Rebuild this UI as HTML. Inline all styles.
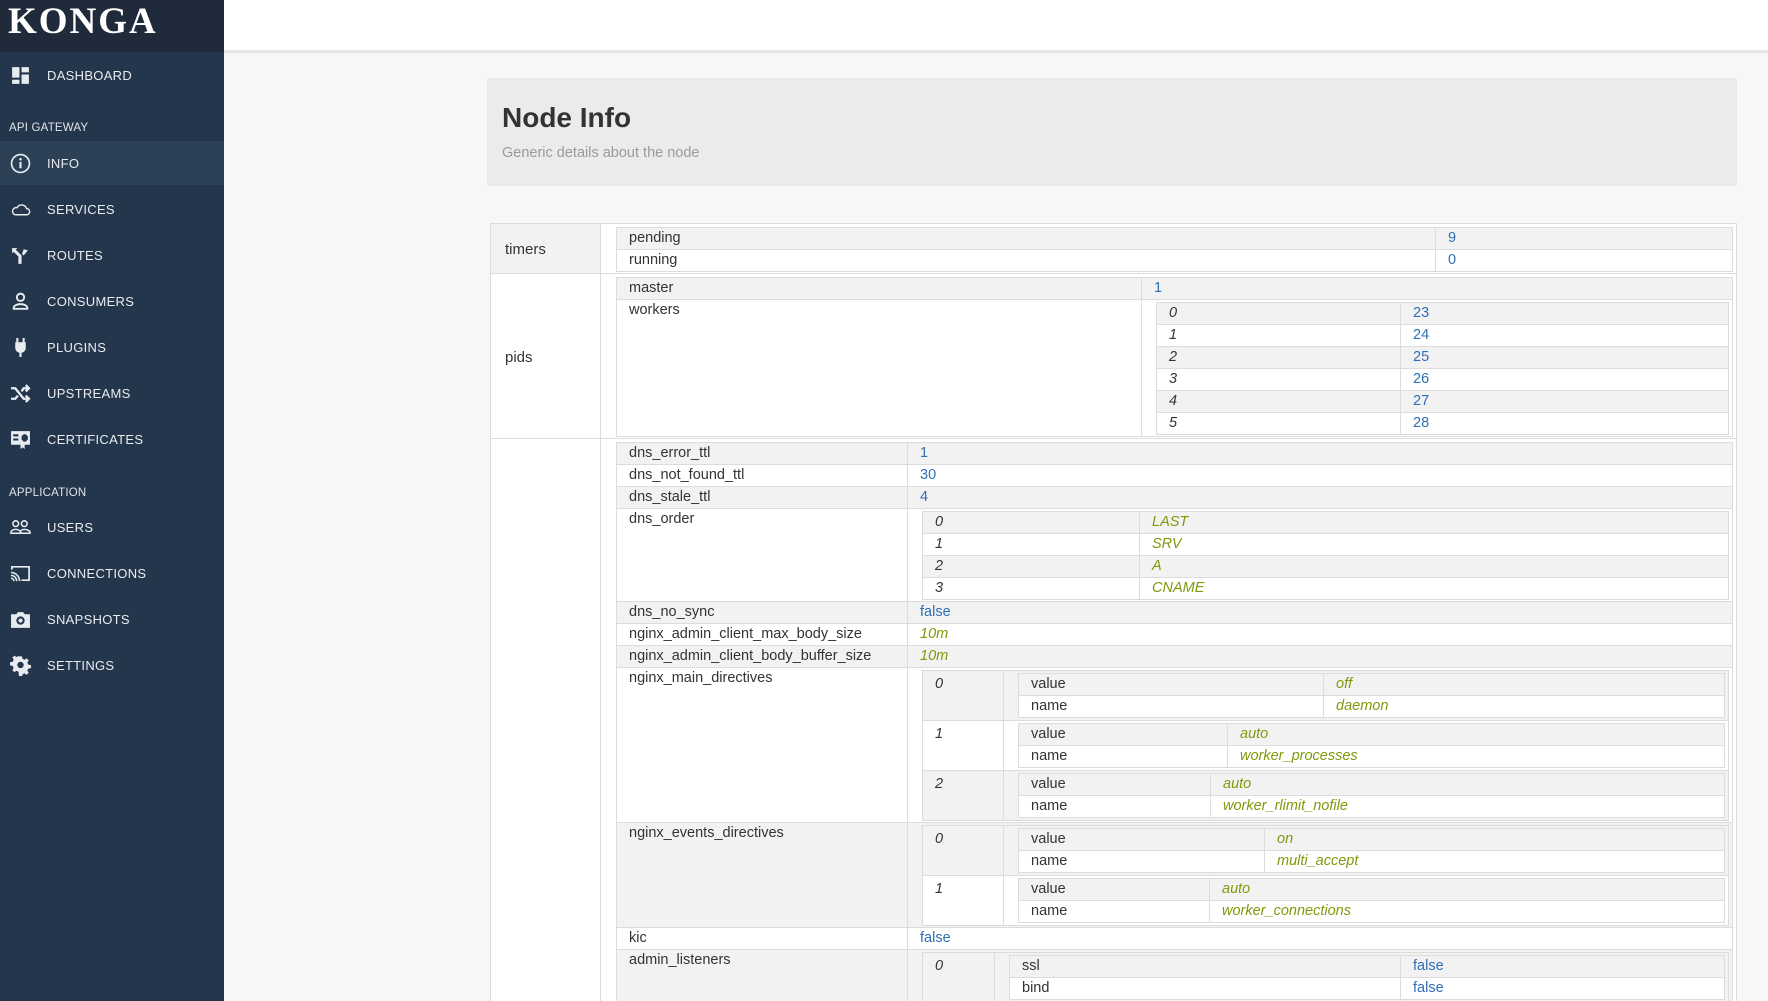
<!DOCTYPE html>
<html><head><meta charset="utf-8"><style>
*{box-sizing:border-box;margin:0;padding:0}
html{width:1768px;height:1001px;overflow:hidden}
body{width:1768px;height:1001px;overflow:hidden;background:#f7f7f7;font-family:"Liberation Sans",sans-serif;color:#333;position:relative}
#sb{position:absolute;left:0;top:0;width:224px;height:1001px;background:#24364b}
#logo{height:52px;background:#1f2b3a;color:#fff;font-family:"Liberation Serif",serif;font-weight:bold;font-size:37px;letter-spacing:2px;padding:0 0 0 8px;line-height:44px}
.it{position:absolute;left:0;width:224px;height:44px;color:#e8ecf0;font-size:13px;letter-spacing:.3px;line-height:46px;padding-left:47px}
.it svg{position:absolute;left:10px;top:12px;width:21px;height:21px}
.it.act{background:#2c4156}
.sec{position:absolute;left:9px;font-size:11.5px;color:#dfe4ea;letter-spacing:.2px}
#hd{position:absolute;left:224px;top:0;right:0;height:53px;background:#fff;border-bottom:3px solid #e6e6e6}
#panel{position:absolute;left:487px;top:78px;width:1250px;height:108px;background:#ebebeb}
#panel h1{position:absolute;left:15px;top:24px;font-size:28px;font-weight:bold;color:#333}
#panel p{position:absolute;left:15px;top:67px;font-size:14.5px;color:#9a9a9a}
.o{position:absolute;left:490px;top:223px;width:1247px;border-collapse:collapse;background:#fff}
.o>tbody>tr>td{border:1px solid #dcdcdc;padding:3px 3px 1px 15px;vertical-align:top}
.o>tbody>tr>td.lb{width:110px;padding-left:14px;vertical-align:middle;font-size:15px;background:#fff}
.o>tbody>tr:first-child>td.lb{background:#f2f2f2}
table.i{width:100%;border-collapse:collapse}
table.i>tbody>tr>td{border:1px solid #dcdcdc;height:21px;line-height:21px;padding:0 12px;font-size:14.5px;vertical-align:top}
table.i>tbody>tr:nth-child(odd)>td{background:#f2f2f2}
table.i>tbody>tr:nth-child(even)>td{background:#fff}
table.i>tbody>tr>td.n{padding:2px 3px 1px 14px}
table.i>tbody>tr>td.nx{padding:2px 3px 2px 14px}
.b{color:#2f6fb5}
.s{color:#7d9a0a;font-style:italic}
.x{font-style:italic}
</style></head><body>
<div id="sb">
<div id="logo">KONGA</div>
<div class="it" style="top:53px"><svg viewBox="0 0 20 20"><path fill="#e8ecf0" d="M2 2h7v10H2zM11 2h7v5h-7zM11 9h7v9h-7zM2 14h7v4H2z"/></svg>DASHBOARD</div>
<div class="sec" style="top:122px">API GATEWAY</div>
<div class="it act" style="top:141px"><svg viewBox="0 0 20 20"><circle cx="10" cy="10" r="8.5" fill="none" stroke="#e8ecf0" stroke-width="1.6"/><rect x="9" y="8.5" width="2" height="6" fill="#e8ecf0"/><circle cx="10" cy="6" r="1.2" fill="#e8ecf0"/></svg>INFO</div>
<div class="it" style="top:187px"><svg viewBox="0 0 24 20"><path fill="none" stroke="#e8ecf0" stroke-width="1.6" d="M6 16h13a3.5 3.5 0 0 0 0-7 6 6 0 0 0-11-1A4 4 0 0 0 6 16z"/></svg>SERVICES</div>
<div class="it" style="top:233px"><svg viewBox="0 0 20 20"><path fill="#e8ecf0" d="M2 3h5l-1.5 1.5L11 10v8H8v-7L3.5 6.5 2 8zM13 4l4 1-4 5-1.5-1.5z"/></svg>ROUTES</div>
<div class="it" style="top:279px"><svg viewBox="0 0 20 20"><circle cx="10" cy="6" r="3.5" fill="none" stroke="#e8ecf0" stroke-width="1.8"/><path fill="none" stroke="#e8ecf0" stroke-width="1.8" d="M3.5 17v-1c0-2 3-3.5 6.5-3.5s6.5 1.5 6.5 3.5v1z"/></svg>CONSUMERS</div>
<div class="it" style="top:325px"><svg viewBox="0 0 20 20"><path fill="#e8ecf0" d="M6 1h2v4h4V1h2v4h1v6a5 5 0 0 1-4 4v4H9v-4a5 5 0 0 1-4-4V5h1z"/></svg>PLUGINS</div>
<div class="it" style="top:371px"><svg viewBox="0 0 20 20"><path fill="none" stroke="#e8ecf0" stroke-width="2.2" d="M1 5h4l8 10h4M1 15h4l2.5-3M11 8l2-3h4M15 2l3 3-3 3M15 12l3 3-3 3"/></svg>UPSTREAMS</div>
<div class="it" style="top:417px"><svg viewBox="0 0 20 20"><path fill="#e8ecf0" d="M1 2h18v13h-5v4l-2-1.5L10 19v-4H1zM3 5v2h5V5zm0 4v2h5V9zm10-4l-2 2v3l2 2h2l2-2V7l-2-2z"/></svg>CERTIFICATES</div>
<div class="sec" style="top:487px">APPLICATION</div>
<div class="it" style="top:505px"><svg viewBox="0 0 22 20"><circle cx="6" cy="6" r="3" fill="none" stroke="#e8ecf0" stroke-width="1.6"/><circle cx="15" cy="6" r="3" fill="none" stroke="#e8ecf0" stroke-width="1.6"/><path fill="none" stroke="#e8ecf0" stroke-width="1.6" d="M1 16v-1c0-2 3-3 5-3s5 1 5 3v1zM11 16v-1c0-2 2-3 4-3s6 1 6 3v1z"/></svg>USERS</div>
<div class="it" style="top:551px"><svg viewBox="0 0 22 20"><path fill="none" stroke="#e8ecf0" stroke-width="1.8" d="M2 6V3h18v14h-8"/><path fill="none" stroke="#e8ecf0" stroke-width="1.6" d="M1 9a9 9 0 0 1 9 9M1 12a6 6 0 0 1 6 6M1 15a3 3 0 0 1 3 3"/></svg>CONNECTIONS</div>
<div class="it" style="top:597px"><svg viewBox="0 0 20 20"><path fill="#e8ecf0" d="M1 5h5l1.5-2h5L14 5h5v13H1zM10 7a4 4 0 1 0 0 8 4 4 0 0 0 0-8zm0 2a2 2 0 1 1 0 4 2 2 0 0 1 0-4z"/></svg>SNAPSHOTS</div>
<div class="it" style="top:643px"><svg viewBox="0 0 20 20"><path fill="#e8ecf0" d="M8.5 1h3l.5 2.5 2 1 2.2-1.4 2 2-1.4 2.2 1 2 2.7.5v3l-2.7.5-1 2 1.4 2.2-2 2-2.2-1.4-2 1-.5 2.7h-3L8 16.5l-2-1-2.2 1.4-2-2L3.2 12.7l-1-2L-.5 10V7l2.7-.5 1-2L1.8 2.3l2-2L6 1.7l2-1zM10 6.5a3.2 3.2 0 1 0 0 6.4 3.2 3.2 0 0 0 0-6.4z" transform="translate(.5 .3) scale(.95)"/></svg>SETTINGS</div>
</div>
<div id="hd"></div>
<div id="panel"><h1>Node Info</h1><p>Generic details about the node</p></div>

<table class="o"><tbody>
<tr><td class="lb">timers</td><td><table class="i"><tbody>
<tr><td style="width:819px">pending</td><td class="b">9</td></tr>
<tr><td>running</td><td class="b">0</td></tr></tbody></table></td></tr>
<tr><td class="lb">pids</td><td><table class="i"><tbody>
<tr><td style="width:525px">master</td><td class="b">1</td></tr>
<tr><td>workers</td><td class="n"><table class="i"><tbody>
<tr><td class="x" style="width:244px">0</td><td class="b">23</td></tr>
<tr><td class="x">1</td><td class="b">24</td></tr>
<tr><td class="x">2</td><td class="b">25</td></tr>
<tr><td class="x">3</td><td class="b">26</td></tr>
<tr><td class="x">4</td><td class="b">27</td></tr>
<tr><td class="x">5</td><td class="b">28</td></tr></tbody></table></td></tr>
</tbody></table></td></tr>
<tr><td class="lb"></td><td><table class="i"><tbody>
<tr><td style="width:291px">dns_error_ttl</td><td class="b">1</td></tr>
<tr><td>dns_not_found_ttl</td><td class="b">30</td></tr>
<tr><td>dns_stale_ttl</td><td class="b">4</td></tr>
<tr><td>dns_order</td><td class="n"><table class="i"><tbody>
<tr><td class="x" style="width:217px">0</td><td class="s">LAST</td></tr>
<tr><td class="x">1</td><td class="s">SRV</td></tr>
<tr><td class="x">2</td><td class="s">A</td></tr>
<tr><td class="x">3</td><td class="s">CNAME</td></tr></tbody></table></td></tr>
<tr><td>dns_no_sync</td><td class="b">false</td></tr>
<tr><td>nginx_admin_client_max_body_size</td><td class="s">10m</td></tr>
<tr><td>nginx_admin_client_body_buffer_size</td><td class="s">10m</td></tr>
<tr><td>nginx_main_directives</td><td class="n"><table class="i"><tbody>
<tr><td class="x" style="width:81px;padding-top:3px">0</td><td class="nx"><table class="i"><tbody><tr><td style="width:305px">value</td><td class="s">off</td></tr><tr><td>name</td><td class="s">daemon</td></tr></tbody></table></td></tr>
<tr><td class="x" style="padding-top:3px">1</td><td class="nx"><table class="i"><tbody><tr><td style="width:209px">value</td><td class="s">auto</td></tr><tr><td>name</td><td class="s">worker_processes</td></tr></tbody></table></td></tr>
<tr><td class="x" style="padding-top:3px">2</td><td class="nx"><table class="i"><tbody><tr><td style="width:192px">value</td><td class="s">auto</td></tr><tr><td>name</td><td class="s">worker_rlimit_nofile</td></tr></tbody></table></td></tr>
</tbody></table></td></tr>
<tr><td>nginx_events_directives</td><td class="n"><table class="i"><tbody>
<tr><td class="x" style="width:81px;padding-top:3px">0</td><td class="nx"><table class="i"><tbody><tr><td style="width:246px">value</td><td class="s">on</td></tr><tr><td>name</td><td class="s">multi_accept</td></tr></tbody></table></td></tr>
<tr><td class="x" style="padding-top:3px">1</td><td class="nx"><table class="i"><tbody><tr><td style="width:191px">value</td><td class="s">auto</td></tr><tr><td>name</td><td class="s">worker_connections</td></tr></tbody></table></td></tr>
</tbody></table></td></tr>
<tr><td>kic</td><td class="b">false</td></tr>
<tr><td>admin_listeners</td><td class="n"><table class="i"><tbody>
<tr><td class="x" style="width:72px;padding-top:3px">0</td><td class="nx"><table class="i"><tbody><tr><td style="width:391px">ssl</td><td class="b">false</td></tr><tr><td>bind</td><td class="b">false</td></tr><tr><td>http2</td><td class="b">false</td></tr><tr><td>backlog</td><td class="b">false</td></tr></tbody></table></td></tr>
</tbody></table></td></tr>
</tbody></table></td></tr>
</tbody></table>
</body></html>
